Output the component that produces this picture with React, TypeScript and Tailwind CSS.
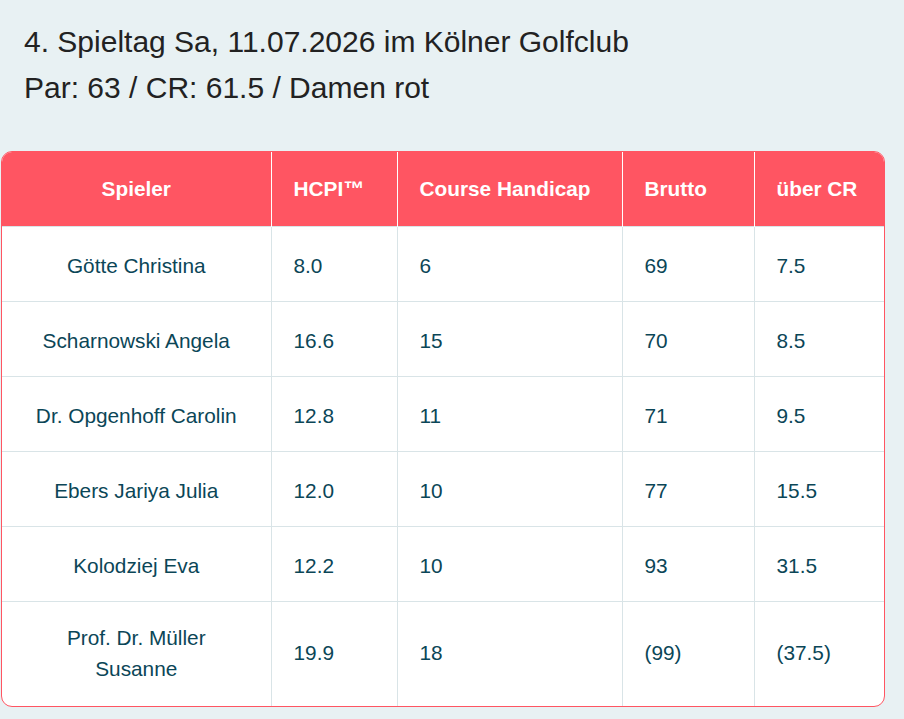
import React from 'react';

type Row = {
  name: React.ReactNode;
  hcpi: string;
  ch: string;
  brutto: string;
  overCr: string;
};

const rows: Row[] = [
  { name: 'Götte Christina', hcpi: '8.0', ch: '6', brutto: '69', overCr: '7.5' },
  { name: 'Scharnowski Angela', hcpi: '16.6', ch: '15', brutto: '70', overCr: '8.5' },
  { name: 'Dr. Opgenhoff Carolin', hcpi: '12.8', ch: '11', brutto: '71', overCr: '9.5' },
  { name: 'Ebers Jariya Julia', hcpi: '12.0', ch: '10', brutto: '77', overCr: '15.5' },
  { name: 'Kolodziej Eva', hcpi: '12.2', ch: '10', brutto: '93', overCr: '31.5' },
  {
    name: (
      <>
        Prof. Dr. Müller
        <br />
        Susanne
      </>
    ),
    hcpi: '19.9',
    ch: '18',
    brutto: '(99)',
    overCr: '(37.5)',
  },
];

const th = 'px-[22px] py-[21px] text-left font-bold text-white border-l border-white first:border-l-0';
const tdBase = 'px-[22px] border-l border-[#d9e4e7] first:border-l-0 align-middle';

const App = () => {
  return (
    <div className="min-h-[719px] bg-[#e8f1f3] font-['Liberation_Sans',Arial,sans-serif]">
      <div className="px-6 pt-[22px]">
        <h1 className="text-[30px] leading-[40px] text-[#222]">4. Spieltag Sa, 11.07.2026 im Kölner Golfclub</h1>
        <p className="mt-[6px] text-[30px] leading-[40px] text-[#222]">Par: 63 / CR: 61.5 / Damen rot</p>
      </div>

      <div className="ml-px mt-[43px] w-[884px] overflow-hidden rounded-[11px] border border-[#ff5562] bg-white">
        <table className="w-full table-fixed border-collapse text-[20.8px] leading-[31px] text-[#0b4657]">
          <colgroup>
            <col className="w-[269px]" />
            <col className="w-[126px]" />
            <col className="w-[225px]" />
            <col className="w-[132px]" />
            <col />
          </colgroup>
          <thead>
            <tr className="h-[74px] bg-[#ff5562]">
              <th className={`${th} !text-center`}>Spieler</th>
              <th className={th}>HCPI™</th>
              <th className={th}>Course Handicap</th>
              <th className={th}>Brutto</th>
              <th className={th}>über CR</th>
            </tr>
          </thead>
          <tbody>
            {rows.map((r, i) => {
              const td = `${tdBase} ${i === rows.length - 1 ? 'pt-[20px] pb-[22px]' : 'pt-[23px] pb-[20px]'}`;
              return (
                <tr key={i} className="border-t border-[#d9e4e7]">
                  <td className={`${td} text-center`}>{r.name}</td>
                  <td className={td}>{r.hcpi}</td>
                  <td className={td}>{r.ch}</td>
                  <td className={td}>{r.brutto}</td>
                  <td className={td}>{r.overCr}</td>
                </tr>
              );
            })}
          </tbody>
        </table>
      </div>
    </div>
  );
};

export default App;
